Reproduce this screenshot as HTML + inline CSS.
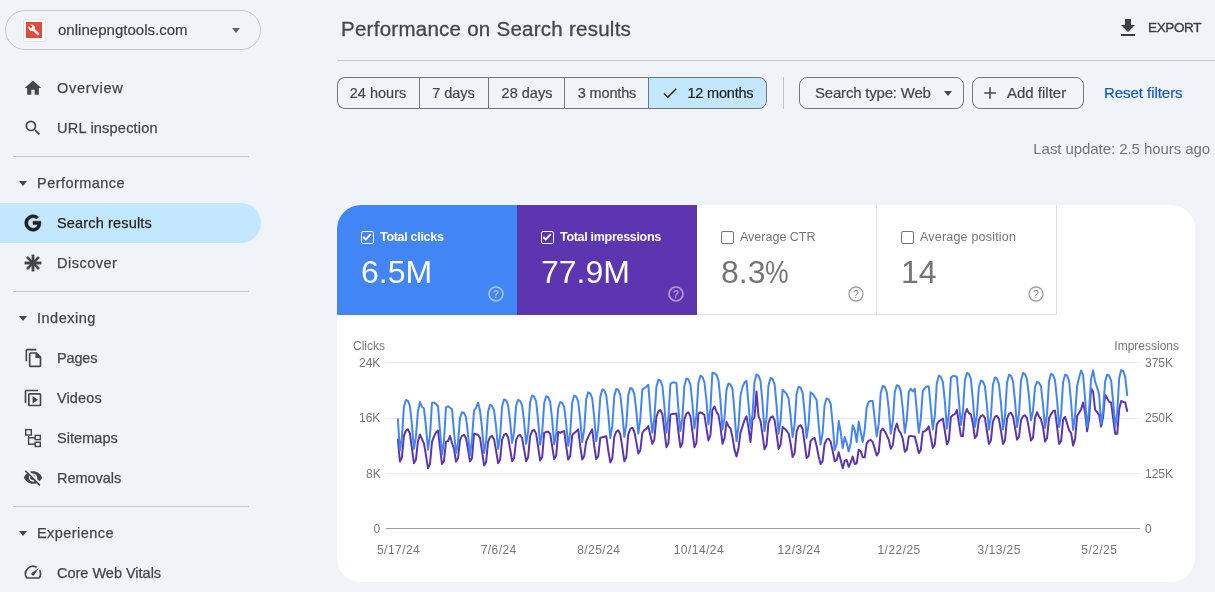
<!DOCTYPE html>
<html><head><meta charset="utf-8"><title>Performance</title>
<style>
*{box-sizing:border-box;margin:0;padding:0}
html,body{width:1215px;height:592px;overflow:hidden;background:#f0f4f9;font-family:"Liberation Sans",sans-serif;color:#444746}
.abs{position:absolute}
#prop{left:5px;top:10px;width:256px;height:40px;border:1px solid #c4c7c5;border-radius:20px}
#prop .ico{left:16.500px;top:7.500px;width:23px;height:23px;background:#fff;border:1px solid #e3e3e3;border-radius:2px}
#prop .ico i{position:absolute;left:2.700px;top:2.700px;width:15.600px;height:15.600px;background:#e24b3b;display:block}
#prop .txt{left:52px;top:10px;font-size:15px;color:#3c4043;letter-spacing:0.02px;-webkit-text-stroke:0.2px #3c4043;white-space:nowrap}
.nav{left:0;width:261px;height:40px}
.nav .t{position:absolute;left:57px;top:11.500px;font-size:14.500px;color:#444746;white-space:nowrap;letter-spacing:0.2px;-webkit-text-stroke:0.25px currentColor}
.nav svg{position:absolute;left:23px;top:10px;width:20px;height:20px;fill:#444746}
.nav.sel{background:#c2e7ff;border-radius:0 20px 20px 0}
.nav.sel .t{color:#1f1f1f}
.nav.sel svg{fill:#1f1f1f}
.hdr{left:0;width:261px;height:40px}
.hdr .t{position:absolute;left:37px;top:11.500px;font-size:14.500px;color:#444746;white-space:nowrap;letter-spacing:0.2px;-webkit-text-stroke:0.25px currentColor}
.hdr i{position:absolute;left:19px;top:18px;border:4.5px solid transparent;border-top:5px solid #444746;border-bottom:0}
.div{left:13px;width:236px;height:1px;background:#c4c7c5}
#title{left:341px;top:17px;font-size:20.500px;color:#444746;white-space:nowrap;letter-spacing:0.26px;-webkit-text-stroke:0.3px #444746}
#export{left:1148px;top:19.500px;font-size:13.500px;color:#3c4043;letter-spacing:-0.37px;-webkit-text-stroke:0.35px #3c4043}
#hline{left:337px;top:60px;width:878px;height:1px;background:#c4c7c5}
.seg{top:77px;height:32px;border:1px solid #747775;border-right:0;font-size:14.500px;color:#444746;line-height:31px;-webkit-text-stroke:0.2px currentColor;text-align:center;white-space:nowrap}
.chip{top:77px;height:32px;border:1px solid #747775;border-radius:8px;font-size:15px;color:#444746;line-height:30px;white-space:nowrap;-webkit-text-stroke:0.2px currentColor}
#reset{left:1104px;top:84px;font-size:15px;color:#0b57d0;white-space:nowrap;letter-spacing:-0.05px;-webkit-text-stroke:0.2px #0b57d0}
#last{right:5px;top:140px;font-size:15px;color:#757575;white-space:nowrap;letter-spacing:-0.07px}
#card{left:337px;top:205px;width:858px;height:377px;background:#fff;border-radius:24px;overflow:hidden}
.m{top:0;width:180px;height:110px}
.m .l{position:absolute;left:43px;top:25px;font-size:12.5px;white-space:nowrap}
.m .v{position:absolute;left:24px;top:48.500px;font-size:32px;white-space:nowrap}
.m .cb{position:absolute;left:24px;top:26px;width:13px;height:13px;border-radius:2px}
.m .q{position:absolute;left:151px;top:81px;width:16px;height:16px}
.ax{font-size:12px;color:#757575;white-space:nowrap;position:absolute}
#n_over{letter-spacing:0.76px}#n_url{letter-spacing:0.22px}#h_perf{letter-spacing:0.46px}#n_search{letter-spacing:0.16px}#n_disc{letter-spacing:0.49px}#h_index{letter-spacing:0.49px}#n_pages{letter-spacing:-0.17px}#n_videos{letter-spacing:0.12px}#n_sitemaps{letter-spacing:0.06px}#n_removals{letter-spacing:-0.04px}#h_exp{letter-spacing:0.44px}#n_cwv{letter-spacing:-0.01px}
#root{position:absolute;left:0;top:0;width:1215px;height:592px;will-change:transform}
</style></head><body><div id="root">

<!-- SIDEBAR -->
<div id="prop" class="abs">
  <div class="ico abs"><i></i>
    <svg class="abs" style="left:4.500px;top:4.500px" width="12" height="12" viewBox="0 0 24 24"><path fill="#fff" d="M22.7 19l-9.1-9.1c.9-2.3.4-5-1.500-6.900-2-2-5-2.400-7.400-1.300L9 6 6 9 1.600 4.700C.4 7.100.9 10.100 2.900 12.100c1.900 1.900 4.600 2.400 6.900 1.500l9.100 9.100c.4.4 1 .4 1.400 0l2.300-2.300c.5-.4.5-1.100.1-1.400z"/></svg>
  </div>
  <div class="txt abs" id="t_prop">onlinepngtools.com</div>
  <i class="abs" style="left:226px;top:17px;border:4.500px solid transparent;border-top:5px solid #5f6368;border-bottom:0"></i>
</div>

<div class="nav abs" style="top:68px"><svg viewBox="0 0 24 24"><path d="M10 20v-6h4v6h5v-8h3L12 3 2 12h3v8z"/></svg><div class="t" id="n_over">Overview</div></div>
<div class="nav abs" style="top:108px"><svg viewBox="0 0 24 24"><path d="M15.500 14h-.79l-.28-.27A6.470 6.470 0 0 0 16 9.500 6.500 6.500 0 1 0 9.500 16c1.610 0 3.090-.59 4.230-1.570l.27.280v.79l5 4.990L20.490 19zm-6 0C7.010 14 5 11.990 5 9.500S7.010 5 9.500 5 14 7.010 14 9.500 11.990 14 9.500 14"/></svg><div class="t" id="n_url">URL inspection</div></div>
<div class="div abs" style="top:156px"></div>
<div class="hdr abs" style="top:163px"><i></i><div class="t" id="h_perf">Performance</div></div>
<div class="nav sel abs" style="top:203px"><svg viewBox="0 0 24 24" style="left:22px;top:9px;width:22px;height:22px;stroke:#1f1f1f;stroke-width:0.5"><path d="M12 11h8.530c.1.600.170 1.200.170 1.900 0 5.300-3.600 9.100-8.700 9.100-5 0-9-4-9-9s4-9 9-9c2.400 0 4.500.9 6.100 2.400l-2.300 2.300C14.800 7.800 13.500 7.300 12 7.300c-3.100 0-5.600 2.600-5.600 5.700s2.500 5.700 5.600 5.700c2.800 0 4.700-1.600 5.200-4.100H12z" transform="translate(0,-1)"/></svg><div class="t" id="n_search">Search results</div></div>
<div class="nav abs" style="top:243px"><svg viewBox="0 0 24 24" style="left:22px;top:9px;width:22px;height:22px;stroke:#444746;stroke-width:0.4"><path d="M13.300 3h-2.600v5.900L6.500 4.700 4.700 6.500l4.200 4.200H3v2.600h5.900l-4.200 4.200 1.800 1.800 4.200-4.200V21h2.600v-5.900l4.200 4.200 1.800-1.800-4.200-4.200H21v-2.600h-5.900l4.200-4.200-1.800-1.800-4.200 4.200z"/></svg><div class="t" id="n_disc">Discover</div></div>
<div class="div abs" style="top:291px"></div>
<div class="hdr abs" style="top:298px"><i></i><div class="t" id="h_index">Indexing</div></div>
<div class="nav abs" style="top:338px"><svg viewBox="0 0 24 24"><path d="M15 1H4c-1.100 0-2 .9-2 2v13h2V3h11zm.6 4H8c-1.100 0-2 .9-2 2v14c0 1.100.9 2 2 2h11c1.100 0 2-.9 2-2V10.400zM19 21H8V7h6v5h5z" transform="translate(1,0)"/></svg><div class="t" id="n_pages">Pages</div></div>
<div class="nav abs" style="top:378px"><svg viewBox="0 0 24 24"><path d="M4 18H2V4c0-1.100.9-2 2-2h14v2H4zM20 6H8c-1.100 0-2 .9-2 2v12c0 1.100.9 2 2 2h12c1.100 0 2-.9 2-2V8c0-1.100-.9-2-2-2m0 14H8V8h12zM11.500 9.500v9l6.500-4.500z"/></svg><div class="t" id="n_videos">Videos</div></div>
<div class="nav abs" style="top:418px"><svg viewBox="0 0 24 24"><g fill="none" stroke="#444746" stroke-width="1.700"><rect x="3.250" y="1.950" width="6.700" height="6.500"/><rect x="14.750" y="8.850" width="6" height="5.100"/><rect x="14.750" y="17.100" width="6" height="5.100"/><path d="M6.700 9v10.450H14.500M6.700 11.750H14.500"/></g></svg><div class="t" id="n_sitemaps">Sitemaps</div></div>
<div class="nav abs" style="top:458px"><svg viewBox="0 0 24 24"><path d="M12 6.500c2.760 0 5 2.240 5 5 0 .51-.1 1-.24 1.460l3.060 3.060c1.390-1.230 2.490-2.770 3.180-4.530C21.270 7.110 17 4 12 4c-1.270 0-2.490.2-3.640.57l2.170 2.170c.47-.14.960-.24 1.470-.24M2.710 3.160a.996.996 0 0 0 0 1.410l1.970 1.970A11.900 11.900 0 0 0 1 11.500C2.730 15.890 7 19 12 19c1.520 0 2.970-.3 4.310-.82l2.720 2.720a.996.996 0 1 0 1.410-1.410L4.130 3.160c-.39-.39-1.030-.39-1.420 0M12 16.500c-2.760 0-5-2.240-5-5 0-.77.180-1.500.49-2.140l1.570 1.570c-.3.180-.6.370-.6.570 0 1.660 1.340 3 3 3 .2 0 .38-.3.570-.070L14.140 16c-.65.320-1.370.5-2.140.5m2.970-5.330a2.970 2.970 0 0 0-2.640-2.640z"/></svg><div class="t" id="n_removals">Removals</div></div>
<div class="div abs" style="top:506px"></div>
<div class="hdr abs" style="top:513px"><i></i><div class="t" id="h_exp">Experience</div></div>
<div class="nav abs" style="top:553px"><svg viewBox="0 0 24 24"><path d="M20.380 8.570l-1.230 1.850a8 8 0 0 1-.22 7.580H5.070A8 8 0 0 1 15.580 6.850l1.850-1.230A10 10 0 0 0 3.350 19a2 2 0 0 0 1.720 1h13.850a2 2 0 0 0 1.740-1 10 10 0 0 0-.27-10.440zm-9.790 6.840a2 2 0 0 0 2.830 0l5.660-8.490-8.490 5.660a2 2 0 0 0 0 2.830" transform="translate(0,-1)"/></svg><div class="t" id="n_cwv">Core Web Vitals</div></div>

<!-- HEADER -->
<div id="title" class="abs">Performance on Search results</div>
<svg class="abs" style="left:1116px;top:16px" width="24" height="24" viewBox="0 0 24 24"><path fill="#3c4043" d="M19 9h-4V3H9v6H5l7 7zM5 18v2h14v-2z"/></svg>
<div id="export" class="abs">EXPORT</div>
<div id="hline" class="abs"></div>

<!-- FILTERS -->
<div class="seg abs" style="left:337px;width:83px;border-radius:8px 0 0 8px;padding-right:2px">24 hours</div>
<div class="seg abs" style="left:419px;width:70px;padding-right:2px">7 days</div>
<div class="seg abs" style="left:488px;width:77px">28 days</div>
<div class="seg abs" style="left:564px;width:85px;letter-spacing:-0.15px">3 months</div>
<div class="seg abs" style="left:648px;width:119px;border-right:1px solid #747775;border-radius:0 8px 8px 0;background:#c2e7ff;color:#1f1f1f;text-align:left;padding-left:38.500px;letter-spacing:-0.2px">12 months
  <svg class="abs" style="left:12px;top:6px" width="18" height="18" viewBox="0 0 24 24"><path fill="#1f1f1f" d="M9 16.170L4.830 12l-1.420 1.410L9 19 21 7l-1.410-1.410z"/></svg>
</div>
<div class="abs" style="left:783px;top:77px;width:1px;height:32px;background:#c4c7c5"></div>
<div class="chip abs" style="left:799px;width:165px;padding-left:15px;letter-spacing:-0.2px">Search type: Web<i class="abs" style="left:144px;top:13px;border:4.5px solid transparent;border-top:5px solid #444746;border-bottom:0"></i></div>
<div class="chip abs" style="left:972px;width:112px;padding-left:34px">Add filter
  <svg class="abs" style="left:7px;top:5px" width="20" height="20" viewBox="0 0 24 24"><path fill="#444746" d="M19 12.900h-6.100V19h-1.800v-6.100H5v-1.800h6.100V5h1.800v6.100H19z"/></svg>
</div>
<div id="reset" class="abs">Reset filters</div>
<div id="last" class="abs">Last update: 2.5 hours ago</div>

<!-- CARD -->
<div id="card" class="abs">
  <div class="m abs" style="left:0;background:#4285f4;color:#fff">
    <div class="cb" style="border:1.500px solid #fff"><svg style="position:absolute;left:0;top:0" width="10" height="10" viewBox="0 0 24 24"><path fill="none" stroke="#fff" stroke-width="4.300" d="M3 12l6 6L21 5"/></svg></div>
    <div class="l" style="font-weight:bold;letter-spacing:-0.3px">Total clicks</div><div class="v">6.5M</div>
    <svg class="q" viewBox="0 0 16 16"><circle cx="8" cy="8" r="7" fill="none" stroke="#fff" stroke-opacity=".5" stroke-width="1.700"/><text x="8" y="11.800" text-anchor="middle" font-size="10.500" font-weight="bold" fill="#fff" fill-opacity=".5" font-family="Liberation Sans">?</text></svg>
  </div>
  <div class="m abs" style="left:180px;background:#5e35b1;color:#fff">
    <div class="cb" style="border:1.500px solid #fff"><svg style="position:absolute;left:0;top:0" width="10" height="10" viewBox="0 0 24 24"><path fill="none" stroke="#fff" stroke-width="4.300" d="M3 12l6 6L21 5"/></svg></div>
    <div class="l" style="font-weight:bold;letter-spacing:-0.3px">Total impressions</div><div class="v">77.9M</div>
    <svg class="q" viewBox="0 0 16 16"><circle cx="8" cy="8" r="7" fill="none" stroke="#fff" stroke-opacity=".5" stroke-width="1.700"/><text x="8" y="11.800" text-anchor="middle" font-size="10.500" font-weight="bold" fill="#fff" fill-opacity=".5" font-family="Liberation Sans">?</text></svg>
  </div>
  <div class="m abs" style="left:360px;color:#757575;border-right:1px solid #e0e0e0;border-bottom:1px solid #e0e0e0">
    <div class="cb" style="border:1.500px solid #757575"></div>
    <div class="l">Average CTR</div><div class="v">8.3<span style="display:inline-block;transform:scaleX(0.83);transform-origin:0 50%">%</span></div>
    <svg class="q" viewBox="0 0 16 16"><circle cx="8" cy="8" r="7" fill="none" stroke="#9e9e9e" stroke-width="1.300"/><text x="8" y="11.800" text-anchor="middle" font-size="10.500" fill="#8a8a8a" font-family="Liberation Sans">?</text></svg>
  </div>
  <div class="m abs" style="left:540px;color:#757575;border-right:1px solid #e0e0e0;border-bottom:1px solid #e0e0e0">
    <div class="cb" style="border:1.500px solid #757575"></div>
    <div class="l" style="letter-spacing:0.2px">Average position</div><div class="v">14</div>
    <svg class="q" viewBox="0 0 16 16"><circle cx="8" cy="8" r="7" fill="none" stroke="#9e9e9e" stroke-width="1.300"/><text x="8" y="11.800" text-anchor="middle" font-size="10.500" fill="#8a8a8a" font-family="Liberation Sans">?</text></svg>
  </div>
</div>

<!-- CHART (page coords) -->
<svg class="abs" style="left:0;top:0;pointer-events:none" width="1215" height="592" viewBox="0 0 1215 592">
  <g stroke="#ebebeb" stroke-width="1"><path d="M386 362.500H1140M386 418.500H1140M386 473.500H1140"/></g>
  <path d="M386 528.500H1140" stroke="#9e9e9e" stroke-width="1"/>
  <path d="M397.9,439.6 L399.9,461.5 L401.9,457.6 L403.9,435.8 L405.9,430.7 L407.9,429.4 L409.9,433.3 L411.9,448.0 L413.9,463.2 L415.9,459.8 L417.9,441.7 L419.9,434.5 L421.9,438.8 L423.9,443.1 L425.9,454.8 L428.0,468.3 L430.0,463.8 L432.0,441.9 L434.0,436.3 L436.0,432.5 L438.0,430.6 L440.0,447.4 L442.0,464.1 L444.0,460.7 L446.0,441.6 L448.0,441.1 L450.0,436.0 L452.0,443.0 L454.0,448.8 L456.0,461.5 L458.0,458.3 L460.0,440.1 L462.0,435.9 L464.0,434.8 L466.0,438.0 L468.0,449.5 L470.0,461.5 L472.0,458.2 L474.0,433.7 L476.0,434.3 L478.0,434.8 L480.0,437.9 L482.0,451.1 L484.1,465.4 L486.1,461.9 L488.1,441.8 L490.1,437.1 L492.1,435.9 L494.1,439.4 L496.1,450.9 L498.1,463.2 L500.1,459.7 L502.1,439.6 L504.1,434.9 L506.1,433.7 L508.1,437.2 L510.1,448.8 L512.1,461.2 L514.1,458.0 L516.1,440.1 L518.1,435.9 L520.1,434.8 L522.1,438.0 L524.1,449.3 L526.1,461.2 L528.1,457.4 L530.1,436.1 L532.1,431.1 L534.1,429.8 L536.1,433.6 L538.1,446.7 L540.1,460.5 L542.2,457.0 L544.2,432.8 L546.2,431.9 L548.2,431.6 L550.2,433.6 L552.2,446.7 L554.2,459.0 L556.2,455.7 L558.2,431.9 L560.2,432.8 L562.2,431.7 L564.2,431.1 L566.2,446.7 L568.2,459.5 L570.2,455.9 L572.2,435.4 L574.2,433.0 L576.2,431.5 L578.2,429.4 L580.2,446.0 L582.2,459.5 L584.2,455.9 L586.2,441.4 L588.2,436.9 L590.2,433.0 L592.2,429.4 L594.2,445.7 L596.2,459.0 L598.2,456.3 L600.3,437.8 L602.3,437.3 L604.3,436.7 L606.3,436.2 L608.3,450.6 L610.3,462.4 L612.3,458.5 L614.3,436.7 L616.3,431.6 L618.3,430.3 L620.3,434.2 L622.3,447.3 L624.3,461.2 L626.3,457.2 L628.3,434.4 L630.3,429.0 L632.3,427.7 L634.3,431.7 L636.3,441.9 L638.3,453.6 L640.3,450.3 L642.3,433.0 L644.3,430.2 L646.3,428.9 L648.3,426.1 L650.3,435.0 L652.3,443.8 L654.3,439.7 L656.4,416.8 L658.4,411.4 L660.4,410.0 L662.4,414.1 L664.4,430.5 L666.4,447.2 L668.4,443.1 L670.4,414.4 L672.4,414.1 L674.4,413.7 L676.4,413.4 L678.4,432.0 L680.4,447.2 L682.4,443.0 L684.4,419.2 L686.4,413.6 L688.4,412.2 L690.4,416.4 L692.4,431.4 L694.4,447.2 L696.4,443.0 L698.4,413.5 L700.4,412.5 L702.4,413.2 L704.4,414.9 L706.4,427.8 L708.4,440.4 L710.4,435.3 L712.4,410.0 L714.5,406.6 L716.5,411.7 L718.5,415.1 L720.5,427.1 L722.5,443.8 L724.5,438.3 L726.5,421.8 L728.5,426.2 L730.5,428.4 L732.5,437.2 L734.5,449.6 L736.5,456.5 L738.5,448.5 L740.5,432.4 L742.5,426.4 L744.5,420.3 L746.5,416.3 L748.5,427.9 L750.5,442.1 L752.5,420.0 L754.5,417.5 L756.5,391.4 L758.5,416.0 L760.5,421.0 L762.5,434.7 L764.5,449.2 L766.5,445.3 L768.5,422.9 L770.6,417.6 L772.6,416.3 L774.6,420.2 L776.6,434.2 L778.6,448.9 L780.6,444.5 L782.6,426.9 L784.6,428.7 L786.6,430.9 L788.6,433.5 L790.6,443.5 L792.6,457.0 L794.6,453.2 L796.6,431.6 L798.6,426.5 L800.6,425.2 L802.6,429.0 L804.6,443.3 L806.6,458.1 L808.6,456.1 L810.6,440.9 L812.6,438.9 L814.6,437.9 L816.6,446.0 L818.6,456.2 L820.6,464.1 L822.6,461.1 L824.6,443.8 L826.6,439.7 L828.7,438.7 L830.7,441.7 L832.7,451.1 L834.7,461.2 L836.7,460.0 L838.7,452.2 L840.7,460.0 L842.7,468.3 L844.7,460.7 L846.7,460.0 L848.7,466.9 L850.7,462.4 L852.7,456.5 L854.7,464.0 L856.7,463.2 L858.7,449.7 L860.7,451.4 L862.7,457.3 L864.7,457.3 L866.7,443.4 L868.7,440.6 L870.7,439.9 L872.7,442.0 L874.7,448.5 L876.7,455.6 L878.7,452.4 L880.7,431.3 L882.7,428.6 L884.8,431.3 L886.8,435.4 L888.8,439.8 L890.8,448.9 L892.8,445.1 L894.8,429.9 L896.8,423.5 L898.8,430.6 L900.8,433.2 L902.8,439.0 L904.8,451.7 L906.8,449.8 L908.8,436.4 L910.8,435.9 L912.8,436.4 L914.8,436.4 L916.8,444.5 L918.8,453.1 L920.8,449.9 L922.8,431.7 L924.8,431.2 L926.8,429.6 L928.8,426.4 L930.8,437.2 L932.8,448.0 L934.8,444.5 L936.8,424.4 L938.8,421.4 L940.8,420.0 L942.9,418.5 L944.9,431.4 L946.9,444.3 L948.9,440.2 L950.9,416.9 L952.9,415.1 L954.9,414.1 L956.9,410.0 L958.9,423.1 L960.9,435.7 L962.9,436.2 L964.9,414.4 L966.9,409.0 L968.9,413.1 L970.9,414.4 L972.9,423.5 L974.9,438.0 L976.9,435.3 L978.9,419.8 L980.9,416.1 L982.9,415.2 L984.9,417.9 L986.9,431.0 L988.9,443.9 L990.9,440.5 L992.9,421.3 L994.9,416.8 L996.9,415.7 L998.9,419.1 L1001.0,431.2 L1003.0,443.9 L1005.0,440.2 L1007.0,418.9 L1009.0,413.9 L1011.0,412.7 L1013.0,416.4 L1015.0,427.6 L1017.0,439.7 L1019.0,436.8 L1021.0,420.1 L1023.0,416.2 L1025.0,415.2 L1027.0,418.1 L1029.0,429.1 L1031.0,440.5 L1033.0,437.7 L1035.0,417.9 L1037.0,412.3 L1039.0,416.5 L1041.0,419.4 L1043.0,426.9 L1045.0,441.4 L1047.0,438.3 L1049.0,418.3 L1051.0,414.3 L1053.0,411.2 L1055.0,410.6 L1057.1,427.2 L1059.1,443.9 L1061.1,441.2 L1063.1,419.6 L1065.1,416.9 L1067.1,423.6 L1069.1,430.4 L1071.1,433.0 L1073.1,445.6 L1075.1,439.1 L1077.1,416.3 L1079.1,412.8 L1081.1,409.4 L1083.1,402.5 L1085.1,412.6 L1087.1,431.3 L1089.1,418.5 L1091.1,388.5 L1093.1,391.5 L1095.1,409.9 L1097.1,412.0 L1099.1,415.1 L1101.1,426.5 L1103.1,417.0 L1105.1,394.9 L1107.1,398.1 L1109.1,401.9 L1111.1,402.5 L1113.1,418.2 L1115.2,433.8 L1117.2,433.8 L1119.2,409.1 L1121.2,400.9 L1123.2,401.9 L1125.2,402.2 L1127.2,411.0" fill="none" stroke="#5e35b1" stroke-width="2" stroke-linejoin="round" stroke-linecap="round"/>
  <path d="M397.9,419.3 L399.9,450.5 L401.9,437.9 L403.9,407.0 L405.9,399.9 L407.9,400.9 L409.9,406.0 L411.9,424.4 L413.9,448.9 L415.9,437.2 L417.9,411.5 L419.9,402.1 L421.9,406.8 L423.9,408.2 L425.9,425.9 L428.0,449.7 L430.0,435.5 L432.0,402.9 L434.0,402.4 L436.0,404.3 L438.0,406.2 L440.0,431.2 L442.0,454.8 L444.0,440.2 L446.0,407.3 L448.0,406.3 L450.0,407.8 L452.0,409.2 L454.0,432.0 L456.0,453.1 L458.0,442.9 L460.0,417.9 L462.0,412.2 L464.0,413.0 L466.0,417.1 L468.0,433.9 L470.0,455.6 L472.0,439.7 L474.0,410.6 L476.0,408.0 L478.0,402.7 L480.0,410.6 L482.0,427.9 L484.1,453.1 L486.1,441.1 L488.1,411.6 L490.1,404.9 L492.1,405.9 L494.1,410.7 L496.1,426.9 L498.1,448.9 L500.1,436.5 L502.1,406.3 L504.1,399.4 L506.1,400.4 L508.1,405.3 L510.1,421.1 L512.1,442.9 L514.1,432.1 L516.1,405.9 L518.1,399.9 L520.1,400.8 L522.1,405.1 L524.1,421.9 L526.1,443.8 L528.1,431.8 L530.1,402.3 L532.1,395.6 L534.1,396.6 L536.1,401.4 L538.1,420.1 L540.1,444.6 L542.2,432.5 L544.2,403.0 L546.2,396.2 L548.2,397.2 L550.2,402.0 L552.2,420.2 L554.2,444.3 L556.2,433.8 L558.2,408.0 L560.2,402.1 L562.2,402.9 L564.2,407.2 L566.2,424.0 L568.2,445.8 L570.2,433.2 L572.2,402.6 L574.2,395.6 L576.2,396.6 L578.2,401.6 L580.2,418.9 L582.2,442.1 L584.2,429.7 L586.2,399.3 L588.2,392.3 L590.2,393.3 L592.2,398.3 L594.2,416.8 L596.2,441.3 L598.2,428.3 L600.3,396.7 L602.3,389.4 L604.3,390.4 L606.3,395.6 L608.3,413.8 L610.3,438.2 L612.3,425.9 L614.3,395.8 L616.3,388.9 L618.3,389.9 L620.3,394.8 L622.3,412.9 L624.3,437.0 L626.3,424.8 L628.3,394.9 L630.3,388.0 L632.3,389.0 L634.3,393.9 L636.3,410.9 L638.3,433.7 L640.3,419.0 L642.3,389.6 L644.3,388.1 L646.3,386.7 L648.3,384.7 L650.3,411.2 L652.3,432.8 L654.3,419.5 L656.4,387.0 L658.4,379.6 L660.4,380.7 L662.4,386.0 L664.4,406.2 L666.4,432.8 L668.4,417.7 L670.4,384.0 L672.4,382.5 L674.4,382.5 L676.4,383.0 L678.4,409.2 L680.4,431.1 L682.4,417.9 L684.4,385.8 L686.4,378.4 L688.4,379.5 L690.4,384.7 L692.4,403.5 L694.4,428.6 L696.4,415.4 L698.4,383.1 L700.4,375.7 L702.4,376.8 L704.4,382.0 L706.4,400.0 L708.4,424.4 L710.4,408.9 L712.4,372.8 L714.5,373.3 L716.5,374.9 L718.5,380.5 L720.5,401.1 L722.5,429.4 L724.5,417.9 L726.5,389.9 L728.5,383.5 L730.5,384.4 L732.5,389.0 L734.5,412.4 L736.5,441.3 L738.5,426.2 L740.5,395.9 L742.5,386.9 L744.5,382.6 L746.5,380.8 L748.5,404.2 L750.5,427.7 L752.5,414.4 L754.5,381.9 L756.5,374.5 L758.5,375.6 L760.5,380.9 L762.5,402.8 L764.5,431.1 L766.5,417.8 L768.5,385.3 L770.6,377.9 L772.6,379.0 L774.6,384.3 L776.6,405.8 L778.6,433.7 L780.6,420.5 L782.6,389.7 L784.6,391.5 L786.6,394.1 L788.6,398.5 L790.6,415.7 L792.6,437.0 L794.6,424.4 L796.6,393.7 L798.6,386.7 L800.6,387.7 L802.6,392.7 L804.6,412.3 L806.6,437.9 L808.6,424.2 L810.6,392.3 L812.6,393.7 L814.6,396.9 L816.6,400.1 L818.6,423.7 L820.6,444.6 L822.6,433.1 L824.6,405.0 L826.6,398.5 L828.7,399.4 L830.7,404.0 L832.7,424.2 L834.7,450.0 L836.7,444.0 L838.7,421.0 L840.7,432.0 L842.7,448.0 L844.7,437.0 L846.7,443.0 L848.7,451.4 L850.7,443.0 L852.7,425.2 L854.7,430.0 L856.7,442.1 L858.7,421.8 L860.7,432.0 L862.7,442.1 L864.7,429.8 L866.7,407.2 L868.7,401.8 L870.7,401.0 L872.7,401.0 L874.7,418.8 L876.7,436.5 L878.7,423.9 L880.7,393.1 L882.7,386.0 L884.8,387.0 L886.8,392.1 L888.8,409.9 L890.8,433.7 L892.8,421.6 L894.8,392.0 L896.8,385.2 L898.8,386.2 L900.8,391.0 L902.8,409.0 L904.8,432.8 L906.8,419.6 L908.8,392.0 L910.8,388.9 L912.8,391.5 L914.8,388.9 L916.8,410.9 L918.8,432.8 L920.8,418.9 L922.8,391.0 L924.8,388.3 L926.8,386.4 L928.8,386.4 L930.8,407.9 L932.8,429.4 L934.8,416.0 L936.8,383.2 L938.8,375.7 L940.8,376.8 L942.9,382.1 L944.9,402.1 L946.9,428.6 L948.9,412.8 L950.9,377.6 L952.9,376.0 L954.9,376.0 L956.9,377.1 L958.9,400.5 L960.9,425.0 L962.9,412.0 L964.9,380.3 L966.9,373.0 L968.9,374.0 L970.9,379.2 L972.9,400.0 L974.9,427.0 L976.9,415.4 L978.9,387.1 L980.9,380.6 L982.9,381.5 L984.9,386.2 L986.9,405.1 L988.9,429.6 L990.9,416.6 L992.9,384.8 L994.9,377.5 L996.9,378.5 L998.9,383.8 L1001.0,403.6 L1003.0,429.6 L1005.0,415.9 L1007.0,382.4 L1009.0,374.7 L1011.0,375.8 L1013.0,381.3 L1015.0,400.9 L1017.0,427.0 L1019.0,413.5 L1021.0,380.6 L1023.0,373.0 L1025.0,374.1 L1027.0,379.5 L1029.0,396.6 L1031.0,420.3 L1033.0,410.7 L1035.0,387.3 L1037.0,381.9 L1039.0,382.7 L1041.0,386.5 L1043.0,404.9 L1045.0,427.9 L1047.0,414.4 L1049.0,381.4 L1051.0,373.8 L1053.0,374.9 L1055.0,380.3 L1057.1,400.4 L1059.1,427.0 L1061.1,413.9 L1063.1,382.0 L1065.1,374.7 L1067.1,375.7 L1069.1,381.0 L1071.1,402.4 L1073.1,430.0 L1075.1,415.1 L1077.1,385.9 L1079.1,377.6 L1081.1,370.4 L1083.1,375.2 L1085.1,398.7 L1087.1,427.0 L1089.1,410.0 L1091.1,378.9 L1093.1,370.4 L1095.1,381.7 L1097.1,387.4 L1099.1,394.1 L1101.1,423.7 L1103.1,411.4 L1105.1,381.6 L1107.1,374.7 L1109.1,375.7 L1111.1,380.6 L1113.1,400.9 L1115.2,427.0 L1117.2,412.8 L1119.2,378.1 L1121.2,370.1 L1123.2,371.2 L1125.2,376.9 L1127.2,395.0" fill="none" stroke="#4285f4" stroke-width="2" stroke-linejoin="round" stroke-linecap="round"/>
</svg>
<div class="ax" style="left:353px;top:339px">Clicks</div>
<div class="ax" style="right:36px;top:339px">Impressions</div>
<div class="ax" style="left:359px;top:356px">24K</div>
<div class="ax" style="left:359px;top:411px">16K</div>
<div class="ax" style="left:366px;top:467px">8K</div>
<div class="ax" style="left:373.500px;top:522px">0</div>
<div class="ax" style="left:1145px;top:356px">375K</div>
<div class="ax" style="left:1145px;top:411px">250K</div>
<div class="ax" style="left:1145px;top:467px">125K</div>
<div class="ax" style="left:1145px;top:522px">0</div>
<div class="ax" style="left:398.6px;top:543px;transform:translateX(-50%);letter-spacing:0.45px">5/17/24</div>
<div class="ax" style="left:498.7px;top:543px;transform:translateX(-50%);letter-spacing:0.45px">7/6/24</div>
<div class="ax" style="left:598.8px;top:543px;transform:translateX(-50%);letter-spacing:0.45px">8/25/24</div>
<div class="ax" style="left:698.9px;top:543px;transform:translateX(-50%);letter-spacing:0.45px">10/14/24</div>
<div class="ax" style="left:799.0px;top:543px;transform:translateX(-50%);letter-spacing:0.45px">12/3/24</div>
<div class="ax" style="left:899.1px;top:543px;transform:translateX(-50%);letter-spacing:0.45px">1/22/25</div>
<div class="ax" style="left:999.2px;top:543px;transform:translateX(-50%);letter-spacing:0.45px">3/13/25</div>
<div class="ax" style="left:1099.3px;top:543px;transform:translateX(-50%);letter-spacing:0.45px">5/2/25</div>
</div></body></html>
